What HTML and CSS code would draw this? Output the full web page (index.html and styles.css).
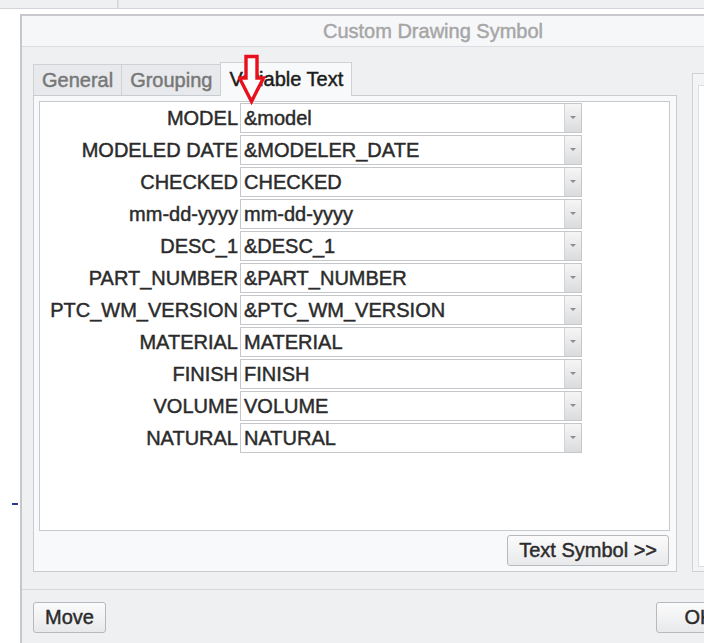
FILE: index.html
```html
<!DOCTYPE html>
<html lang="en">
<head>
  <meta charset="UTF-8" />
  <title>Custom Drawing Symbol</title>
  <link rel="stylesheet" href="styles.css">
</head>
<body>
  <div class="topbar">
    <div class="topbar-cell"></div>
    <div class="topbar-cell wide"></div>
  </div>
  <span class="stray-mark"></span>

  <div class="dialog">
    <div class="titlebar">Custom Drawing Symbol</div>
    <div class="dialog-body">
      <div class="main">
        <div class="tabwidget">
          <div class="tabs">
            <div class="tab">General</div>
            <div class="tab">Grouping</div>
            <div class="tab active">Variable Text</div>
          </div>
          <div class="tab-panel">
            <div class="var-list">
              <div class="var-label">MODEL</div>
              <div class="combo"><span class="combo-value">&amp;model</span><span class="combo-btn"></span></div>
              <div class="var-label">MODELED DATE</div>
              <div class="combo"><span class="combo-value">&amp;MODELER_DATE</span><span class="combo-btn"></span></div>
              <div class="var-label">CHECKED</div>
              <div class="combo"><span class="combo-value">CHECKED</span><span class="combo-btn"></span></div>
              <div class="var-label">mm-dd-yyyy</div>
              <div class="combo"><span class="combo-value">mm-dd-yyyy</span><span class="combo-btn"></span></div>
              <div class="var-label">DESC_1</div>
              <div class="combo"><span class="combo-value">&amp;DESC_1</span><span class="combo-btn"></span></div>
              <div class="var-label">PART_NUMBER</div>
              <div class="combo"><span class="combo-value">&amp;PART_NUMBER</span><span class="combo-btn"></span></div>
              <div class="var-label">PTC_WM_VERSION</div>
              <div class="combo"><span class="combo-value">&amp;PTC_WM_VERSION</span><span class="combo-btn"></span></div>
              <div class="var-label">MATERIAL</div>
              <div class="combo"><span class="combo-value">MATERIAL</span><span class="combo-btn"></span></div>
              <div class="var-label">FINISH</div>
              <div class="combo"><span class="combo-value">FINISH</span><span class="combo-btn"></span></div>
              <div class="var-label">VOLUME</div>
              <div class="combo"><span class="combo-value">VOLUME</span><span class="combo-btn"></span></div>
              <div class="var-label">NATURAL</div>
              <div class="combo"><span class="combo-value">NATURAL</span><span class="combo-btn"></span></div>
            </div>
            <div class="panel-actions">
              <button class="btn btn-symbol">Text Symbol &gt;&gt;</button>
            </div>
          </div>
        </div>
        <div class="side-panel">
          <div class="side-inner"></div>
        </div>
      </div>

      <div class="footer">
        <button class="btn">Move</button>
        <div class="spacer"></div>
        <button class="btn btn-wide">OK</button>
        <button class="btn btn-wide">Cancel</button>
      </div>
    </div>
  </div>

  <!-- red annotation arrow drawn over the tab -->
  <svg class="arrow-mark" width="28" height="52" viewBox="0 0 28 52">
    <polygon points="8,2.5 19,2.5 19,24 25.5,24 13.5,47.5 1.5,24 8,24" fill="#fdfdfd" stroke="#e8101c" stroke-width="3.4" stroke-linejoin="miter" />
  </svg>
</body>
</html>
```

FILE: styles.css
```css
* { box-sizing: border-box; }

body {
  margin: 0;
  width: 704px;
  height: 643px;
  overflow: hidden;
  position: relative;
  background: #ffffff;
  font-family: "Liberation Sans", Arial, sans-serif;
  font-size: 20px;
  color: #2b2b2b;
  -webkit-text-stroke: 0.45px currentColor;
}

.topbar {
  display: flex;
  height: 9px;
  background: #eef0f2;
  border-bottom: 1px solid #d2d4d7;
}

.topbar-cell {
  width: 118px;
  border-right: 1px solid #d4d6d9;
}

.topbar-cell.wide {
  flex: 1;
  border-left: 1px solid #dcdee1;
  border-right: none;
}

.stray-mark {
  position: absolute;
  left: 12px;
  top: 503px;
  width: 6px;
  height: 2px;
  background: #2b3a9a;
}

.dialog {
  margin: 5px 0 0 20px;
  width: 824px;
  border-top: 2px solid #c8c9cc;
  border-left: 2px solid #c6c7ca;
  background: #eef0f2;
}

.titlebar {
  height: 31px;
  line-height: 30px;
  text-align: center;
  color: #a6a6a6;
  background: #f6f7f9;
  border-bottom: 1px solid #dcdde0;
}

.dialog-body {
  padding: 15px 0 0 11px;
}

.main {
  display: flex;
  align-items: flex-start;
}

.tabwidget {
  width: 644px;
}

.tabs {
  display: flex;
  align-items: flex-end;
  height: 33px;
}

.tab {
  height: 31px;
  line-height: 30px;
  padding: 0 8px;
  margin-right: -1px;
  color: #777;
  background: #e7e9ec;
  border: 1px solid #cfd1d4;
  border-bottom: none;
}

.tab.active {
  position: relative;
  z-index: 1;
  height: 34px;
  line-height: 33px;
  margin-bottom: -1px;
  color: #1c1c1c;
  background: #f8f9fa;
}

.tab-panel {
  height: 477px;
  padding: 5px 6px 5px 5px;
  background: #f8f9fa;
  border: 1px solid #c9cbce;
}

.var-list {
  height: 430px;
  padding-top: 1px;
  display: grid;
  grid-template-columns: 198px 342px;
  grid-auto-rows: 30px;
  column-gap: 2px;
  row-gap: 2px;
  align-content: start;
  background: #ffffff;
  border: 1px solid #c8c9cc;
}

.var-label {
  line-height: 30px;
  text-align: right;
  white-space: nowrap;
}

.combo {
  display: flex;
  border: 1px solid #c6c7ca;
  background: #ffffff;
}

.combo-value {
  flex: 1;
  padding-left: 3px;
  line-height: 28px;
  white-space: nowrap;
}

.combo-btn {
  width: 17px;
  position: relative;
  background: linear-gradient(#f6f6f7, #dadbdd);
  border-left: 1px solid #d3d4d6;
}

.combo-btn::after {
  content: "";
  position: absolute;
  left: 5px;
  top: 12px;
  border-left: 3px solid transparent;
  border-right: 3px solid transparent;
  border-top: 3px solid #8e8e8e;
}

.panel-actions {
  display: flex;
  justify-content: flex-end;
  margin-top: 4px;
}

.btn {
  height: 31px;
  padding: 0 11px;
  font-family: inherit;
  font-size: 20px;
  color: #2b2b2b;
  -webkit-text-stroke: 0.45px currentColor;
  background: linear-gradient(#fbfbfb, #e8e9eb);
  border: 1px solid #b7b9bc;
  border-radius: 3px;
}

.btn-symbol {
  margin-right: 1px;
}

.btn-wide {
  width: 86px;
  margin-left: 6px;
}

.side-panel {
  width: 140px;
  height: 499px;
  margin: 11px 0 0 15px;
  padding: 11px 5px 4px 5px;
  background: #f3f4f6;
  border: 1px solid #cfd1d4;
}

.side-inner {
  height: 100%;
  background: #ffffff;
  border: 1px solid #dddee0;
}

.footer {
  display: flex;
  margin-top: 17px;
  margin-left: -11px;
  padding: 12px 10px 20px 11px;
  border-top: 1px solid #d6d8db;
}

.spacer {
  flex: 1;
}

.arrow-mark {
  position: absolute;
  z-index: 2;
  left: 238px;
  top: 54px;
}
```
